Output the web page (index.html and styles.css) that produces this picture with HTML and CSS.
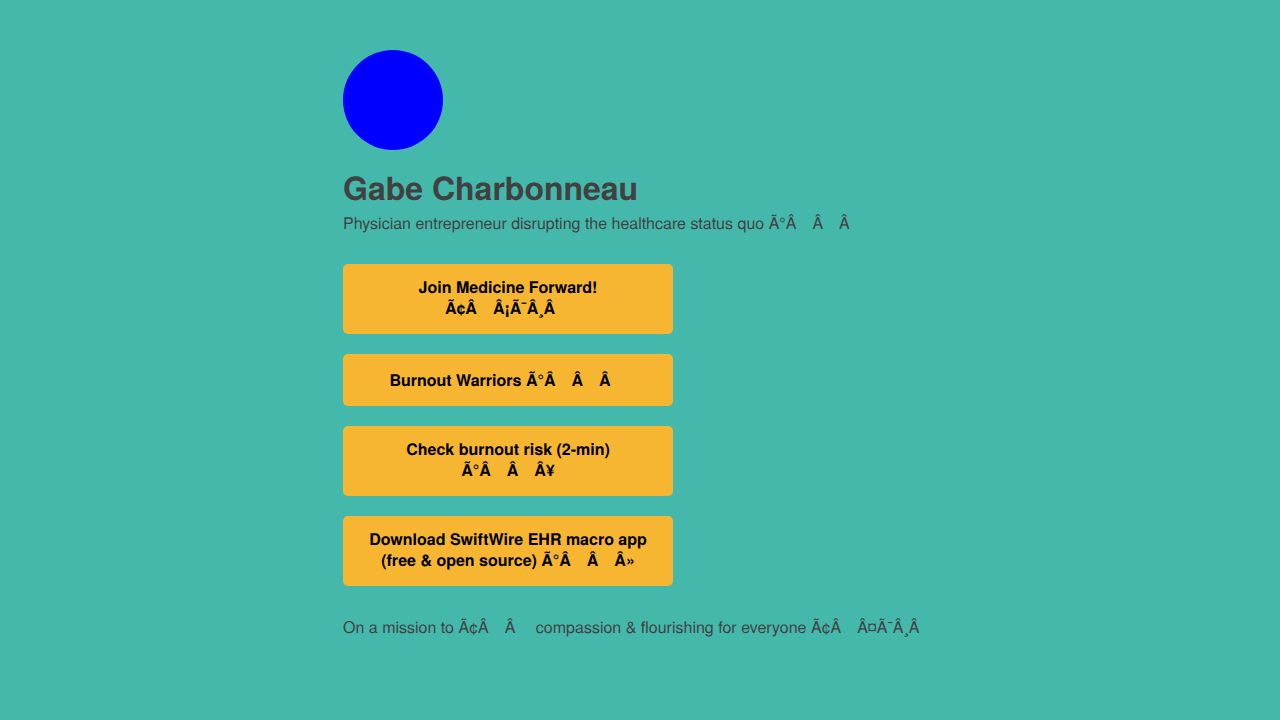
FILE: index.html
```html
<!DOCTYPE html>
<html lang="en">
<head>
<meta charset="utf-8">
<meta name="viewport" content="width=device-width, initial-scale=1">
<title>Gabe Charbonneau</title>
<link rel="stylesheet" href="styles.css">
</head>
<body>
<main class="profile">
<div class="avatar"></div>
<h1 class="name">Gabe Charbonneau</h1>
<p class="tagline">Physician entrepreneur disrupting the healthcare status quo Ã°Â&emsp;Â&emsp;Â</p>
<nav class="links">
<a class="link" href="#">Join Medicine Forward!<br>Ã¢Â&emsp;Â¡Ã¯Â¸Â&emsp;</a>
<a class="link short" href="#">Burnout Warriors Ã°Â&emsp;Â&emsp;Â&emsp;</a>
<a class="link" href="#">Check burnout risk (2-min)<br>Ã°Â&emsp;Â&emsp;Â¥</a>
<a class="link" href="#">Download SwiftWire EHR macro app (free &amp; open source) Ã°Â&emsp;Â&emsp;Â»</a>
</nav>
<p class="mission">On a mission to Ã¢Â&emsp;Â&emsp; compassion &amp; flourishing for everyone Ã¢Â&emsp;Â¤Ã¯Â¸Â</p>
</main>
</body>
</html>
```

FILE: styles.css
```css
* {
  box-sizing: border-box;
}

body {
  margin: 0;
  min-height: 100vh;
  background: #45b8ac;
  color: #414141;
  font: 16px/21px "TeX Gyre Heros", "Nimbus Sans", "Liberation Sans", Arial, sans-serif;
  text-rendering: geometricPrecision;
}

.profile {
  width: fit-content;
  max-width: 100%;
  min-width: min(594px, 100%);
  margin: 0 auto;
  padding: 50px 0;
}

.avatar {
  width: 100px;
  height: 100px;
  border-radius: 50%;
  background: #00f;
}

.name {
  margin: 18px 0 6px;
  font-size: 32px;
  line-height: 38px;
}

.tagline {
  margin: 0 0 31px;
}

.links {
  display: grid;
  gap: 20px;
  max-width: 330px;
}

.link {
  display: block;
  padding: 12px 24px 16px;
  border-radius: 5px;
  background: #f6b632;
  color: #000;
  font-weight: 700;
  text-align: center;
  text-decoration: none;
}

.short {
  padding: 15px 24px 16px;
}

.mission {
  margin: 30px 0 0;
}
```
